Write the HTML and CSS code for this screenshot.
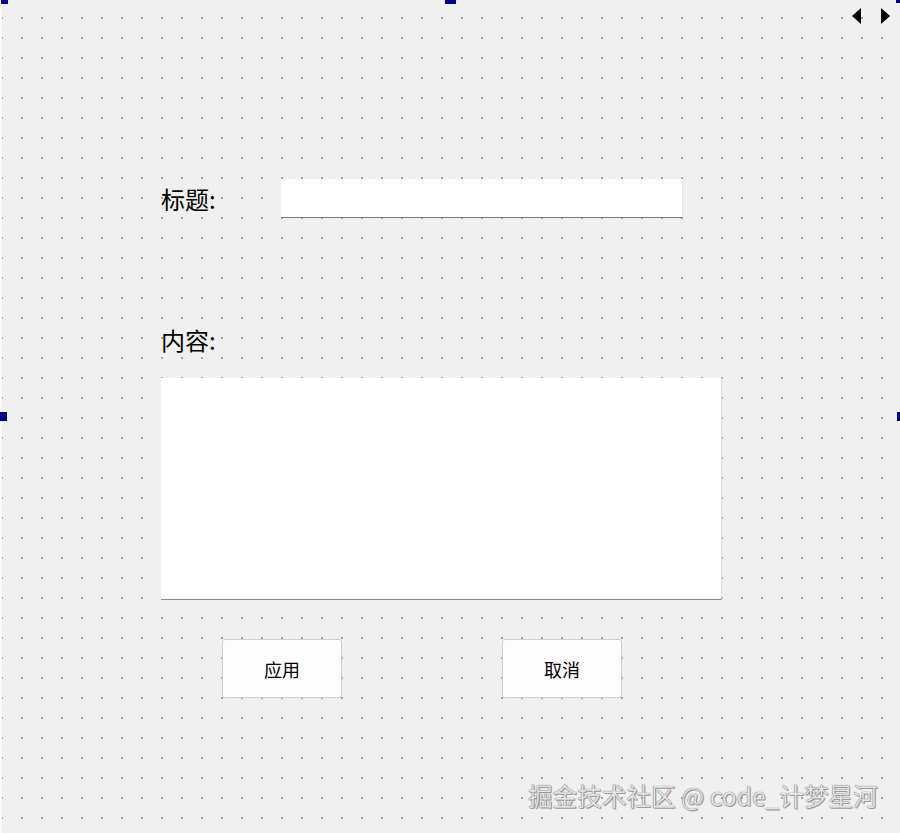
FILE: index.html
```html
<!DOCTYPE html>
<html lang="zh-CN">
  <head>
    <meta charset="UTF-8" />
    <title>Form</title>
    <link rel="stylesheet" href="styles.css">
  </head>
  <body>
    <div class="canvas">
      <span class="handle handle-tl"></span>
      <span class="handle handle-tc"></span>
      <span class="handle handle-tr"></span>
      <span class="handle handle-ml"></span>
      <span class="handle handle-mr"></span>

      <div class="scroll-arrows">
        <span class="arrow arrow-left"></span>
        <span class="arrow arrow-right"></span>
      </div>

      <div class="form">
        <div class="title-row">
          <label class="label title-label">标题:</label>
          <div class="line-edit"></div>
        </div>

        <label class="label content-label">内容:</label>
        <div class="text-edit"></div>

        <div class="buttons">
          <button class="button apply">应用</button>
          <button class="button cancel">取消</button>
        </div>
      </div>

      <div class="watermark">掘金技术社区 @ code_计梦星河</div>
    </div>
  </body>
</html>
```

FILE: styles.css
```css
/* designer form canvas */
html,
body {
  margin: 0;
  padding: 0;
}
body {
  width: 900px;
  height: 833px;
  overflow: hidden;
  background: #f0f0f0;
  font-family: "Noto Sans CJK SC", "Noto Sans", sans-serif;
  color: #000;
}
.canvas {
  position: relative;
  width: 900px;
  height: 833px;
  box-sizing: border-box;
  border-left: 2px solid #f8f8f8;
  background-color: #f0f0f0;
  background-image: conic-gradient(from 270deg at 2px 2px, #a6a6a6 25%, transparent 0);
  background-size: 20px 20px;
  background-position: -1px 17px;
}

/* selection handles */
.handle {
  position: absolute;
  background: #000080;
}
.handle-tl {
  left: -1px;
  top: 0;
  width: 7px;
  height: 4px;
}
.handle-tc {
  left: 443px;
  top: 0;
  width: 11px;
  height: 4px;
}
.handle-tr {
  left: 894px;
  top: 0;
  width: 6px;
  height: 3px;
}
.handle-ml {
  left: -2px;
  top: 412px;
  width: 7px;
  height: 9px;
}
.handle-mr {
  left: 895px;
  top: 412px;
  width: 5px;
  height: 9px;
}

.scroll-arrows {
  position: absolute;
  top: 8px;
  left: 850px;
  display: flex;
  gap: 20px;
}
.arrow {
  width: 0;
  height: 0;
  border-top: 8px solid transparent;
  border-bottom: 8px solid transparent;
}
.arrow-left {
  border-right: 9px solid #000;
}
.arrow-right {
  border-left: 9px solid #000;
}

/* form widgets */
.form {
  display: flex;
  flex-direction: column;
  align-items: flex-start;
  padding: 179px 0 0 159px;
}
.label {
  font-size: 24px;
  line-height: 30px;
}
.title-row {
  display: flex;
  align-items: center;
}
.title-label {
  width: 120px;
}
.line-edit {
  width: 401px;
  height: 38px;
  background: #fff;
  border-bottom: 1px solid #7a7a7a;
  border-right: 1px solid #e6e6e6;
}
.content-label {
  margin-top: 107px;
}
.text-edit {
  margin-top: 23px;
  width: 560px;
  height: 221px;
  background: #fff;
  border-bottom: 1px solid #8a8a8a;
  border-right: 1px solid #dcdcdc;
}
.buttons {
  display: flex;
  gap: 160px;
  margin-top: 39px;
  padding-left: 61px;
}
.button {
  width: 120px;
  height: 59px;
  box-sizing: border-box;
  border: 1px solid #cfcfcf;
  border-radius: 3px;
  background: #fdfdfd;
  font-family: "Noto Sans CJK SC", sans-serif;
  font-size: 18px;
  color: #000;
  padding: 0;
}

.watermark {
  position: absolute;
  left: 526px;
  top: 778px;
  font-size: 24.6px;
  line-height: 34px;
  color: #e4e4e4;
  text-shadow: 0 0 1px #333, 1px 1px 0 #aaa;
  white-space: nowrap;
}
```
